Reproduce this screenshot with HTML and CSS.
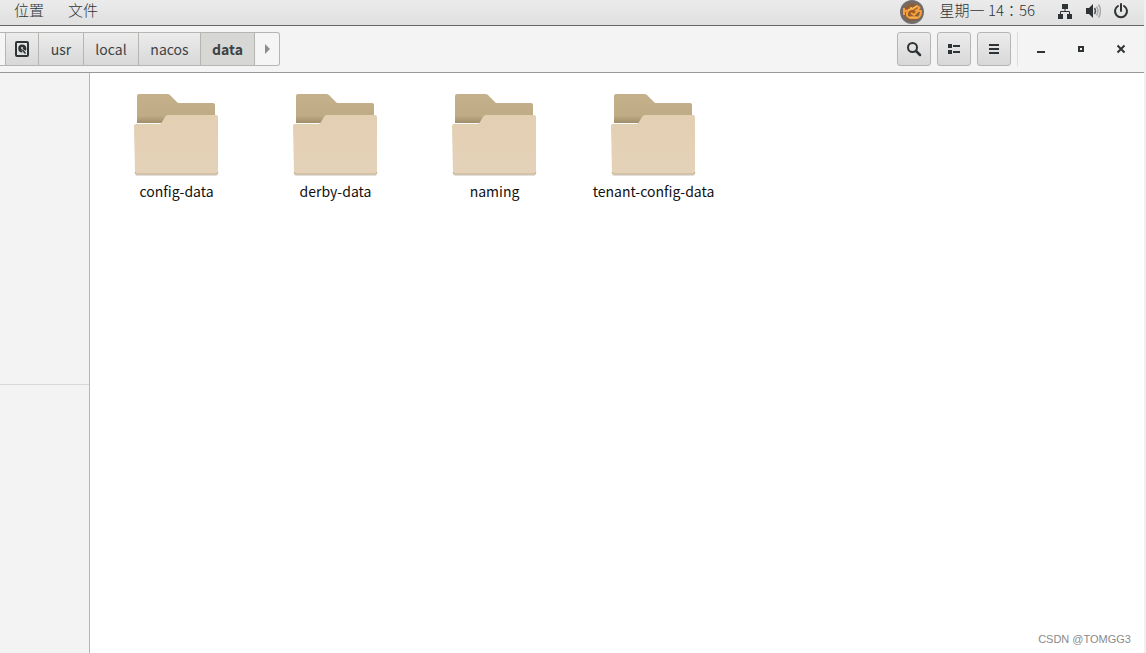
FILE: index.html
```html
<!DOCTYPE html>
<html lang="zh-CN">
<head>
<meta charset="utf-8">
<title>data</title>
<link rel="stylesheet" href="styles.css">
</head>
<body>
<svg class="defs" aria-hidden="true">
  <defs>
    <linearGradient id="back" x1="0" y1="0" x2="0" y2="1">
      <stop offset="0" stop-color="#c4b18c"/><stop offset=".75" stop-color="#bfac86"/><stop offset="1" stop-color="#a08e6b"/>
    </linearGradient>
    <linearGradient id="front" x1="0" y1="0" x2="0" y2="1">
      <stop offset="0" stop-color="#e3cfb2"/><stop offset="1" stop-color="#e4d2b9"/>
    </linearGradient>
    <symbol id="folder" viewBox="0 0 86 84">
      <path d="M3 31V4q0-2 2-2h28q2 0 3 1l6 6q1 2 3 2h34q2 0 2 2v18z" fill="url(#back)"/>
      <path d="M1 80h83q0 4-2 4H3q-2 0-2-4z" fill="#000" opacity=".12"/>
      <path d="M2 32h23q2 0 3-2l3-5q1-2 3-2h48q2 0 2 2v56q0 2-2 2H3q-2 0-2-2L0 34q0-2 2-2z" fill="url(#front)"/>
      <path d="M1 80q0 2 2 2h79q2 0 2-2" fill="none" stroke="#c4b293"/>
    </symbol>
  </defs>
</svg>
<div class="desktop">
  <header class="panel">
    <nav class="menus">
      <button class="menu">位置</button>
      <button class="menu">文件</button>
    </nav>
    <div class="status">
      <svg class="tray" viewBox="0 0 24 24" role="img" aria-label="输入法">
        <defs><radialGradient id="tray"><stop offset="0" stop-color="#a85a1c"/><stop offset=".6" stop-color="#87603f"/><stop offset="1" stop-color="#6c7078"/></radialGradient></defs>
        <circle cx="12" cy="12" r="12" fill="url(#tray)"/>
        <path d="M4 8v7M4 12l3-2M7 16q-1-7 6-7l4-3 3 2M7 16l3 2h7q4-1 4-7h-3l-4 4-3-2M15 11l5-3M11 9V7" fill="none" stroke="#f79f3b" stroke-width="2" stroke-linejoin="round"/>
        <path d="M8 10l5-2 4-2M10 17h7" fill="none" stroke="#ffc267"/>
      </svg>
      <time class="clock" lang="zh-Hant">星期一 14：56</time>
      <svg class="sys" viewBox="0 0 16 16" fill="#2e3436"><path d="M5 1h6v5H5zM1 11h5v5H1zM10 11h5v5h-5z"/><path d="M8 6v3M3.500 11V8.500h9V11" fill="none" stroke="#2e3436"/></svg>
      <svg class="sys" viewBox="0 0 16 16" fill="#2e3436"><path d="M1 5h3l4-4v14l-4-4H1z"/><path d="M9.500 5q2 3 0 6" fill="none" stroke="#555" stroke-width="1.500"/><path d="M11.500 3.500q3 4.500 0 9M13.500 1.500q4 6.500 0 13" fill="none" stroke="#aaa" stroke-width="1.500"/></svg>
      <svg class="sys" viewBox="0 0 16 16" fill="none" stroke="#2e3436" stroke-width="2"><path d="M5 3a6 6 0 1 0 6 0M8 1v7" stroke-linecap="round"/></svg>
    </div>
  </header>
  <div class="toolbar">
    <nav class="path" aria-label="路径">
      <button class="crumb edge" aria-label="后退"></button>
      <button class="crumb disk" aria-label="计算机"><svg class="icon" viewBox="0 0 16 16"><rect x="2" y="1" width="12" height="14" rx="1" fill="none" stroke="#2e3436" stroke-width="2"/><path d="M8 3.500a4 4 0 1 0 .5 8L7.500 9 9 8l2.500 2A4 4 0 0 0 8 3.500z" fill="#2e3436"/><circle cx="8" cy="7" r="1" fill="#e4e4e4"/><path d="M8.500 9l3 3.500" stroke="#2e3436" stroke-width="1.500"/></svg></button>
      <button class="crumb usr">usr</button>
      <button class="crumb local">local</button>
      <button class="crumb nacos">nacos</button>
      <button class="crumb data">data</button>
      <button class="crumb next" aria-label="前进"><svg class="icon" viewBox="0 0 16 16"><path d="M6 3l5 5-5 5z" fill="#8b8e8f"/></svg></button>
    </nav>
    <div class="actions">
      <button class="tool" aria-label="搜索"><svg class="icon" viewBox="0 0 16 16" fill="none" stroke="#2e3436" stroke-width="2"><circle cx="6.500" cy="6.500" r="4.500"/><path d="M10 10l4 4" stroke-width="2.500" stroke-linecap="round"/></svg></button>
      <button class="tool" aria-label="列表视图"><svg class="icon" viewBox="0 0 16 16" fill="#2e3436"><path d="M2 3h4v4H2zM2 9h4v4H2zM7 4h7v2H7zM7 10h7v2H7z"/></svg></button>
      <button class="tool" aria-label="菜单"><svg class="icon" viewBox="0 0 16 16" fill="#2e3436"><path d="M3 3h10v2H3zM3 7h10v2H3zM3 11h10v2H3z"/></svg></button>
      <div class="window">
        <button class="win" aria-label="最小化"><svg class="icon" viewBox="0 0 16 16"><path d="M4 10h8v2H4z" fill="#2e3436"/></svg></button>
        <button class="win" aria-label="最大化"><svg class="icon" viewBox="0 0 16 16"><path d="M6 6h4v4H6z" fill="none" stroke="#2e3436" stroke-width="2"/></svg></button>
        <button class="win" aria-label="关闭"><svg class="icon" viewBox="0 0 16 16"><path d="M4.500 4.500l7 7M11.500 4.500l-7 7" stroke="#2e3436" stroke-width="2"/></svg></button>
      </div>
    </div>
  </div>
  <div class="body">
    <aside class="sidebar"><div class="places"></div></aside>
    <main class="files">
      <ul class="grid">
        <li class="item"><svg class="folder"><use href="#folder"/></svg><span>config-data</span></li>
        <li class="item"><svg class="folder"><use href="#folder"/></svg><span>derby-data</span></li>
        <li class="item"><svg class="folder"><use href="#folder"/></svg><span>naming</span></li>
        <li class="item"><svg class="folder"><use href="#folder"/></svg><span>tenant-config-data</span></li>
      </ul>
      <footer class="credit">CSDN @TOMGG3</footer>
    </main>
  </div>
</div>
</body>
</html>
```

FILE: styles.css
```css
* { box-sizing: border-box; }
body {
  margin: 0;
  background: #f0f0f0;
  color: #2e3436;
  font: 14px/20px "Noto Sans CJK SC", "Noto Sans", sans-serif;
}
button { font: inherit; color: inherit; margin: 0; padding: 0; border: 0; background: none; }
svg { display: block; flex: none; }
.defs { position: absolute; width: 0; height: 0; }
.desktop { display: flex; flex-direction: column; min-height: 100vh; margin-right: 2px; }
.panel {
  display: flex;
  justify-content: space-between;
  height: 26px;
  padding: 0 15px 0 14px;
  background: linear-gradient(#ebebeb, #e0e0e0);
  border-bottom: 1px solid #666;
  font-size: 15px;
}
.menus { display: flex; gap: 24px; font-weight: 300; }
.menu { height: 20px; }
.status { display: flex; align-items: flex-start; gap: 12px; }
.tray { width: 24px; height: 24px; margin-right: 4px; }
.clock { font-family: "Noto Sans CJK TC", "Noto Sans CJK SC", sans-serif; font-weight: 300; margin-right: 10px; }
.sys { width: 16px; height: 16px; margin-top: 3px; }
.toolbar {
  display: flex;
  justify-content: space-between;
  height: 47px;
  padding: 6px 7px 0 0;
  background: #f4f4f4;
  border-bottom: 1px solid #999;
}
.path { display: flex; height: 34px; color: #3c4244; }
.crumb {
  display: flex;
  align-items: center;
  justify-content: center;
  border: 1px solid #b5b5b1;
  border-left-width: 0;
  background: linear-gradient(#ececec, #d8d8d8);
}
.edge, .next { background: #f5f5f5; }
.edge { width: 6px; }
.disk { width: 33px; }
.usr { width: 45px; }
.local { width: 55px; }
.nacos { width: 62px; }
.data { width: 54px; background: #d7d7d5; font-weight: 700; }
.next { width: 25px; border-radius: 0 3px 3px 0; }
.icon { width: 16px; height: 16px; }
.actions { display: flex; gap: 6px; height: 34px; }
.tool {
  display: flex;
  align-items: center;
  justify-content: center;
  width: 34px;
  border: 1px solid #b5b5b1;
  border-radius: 3px;
  background: linear-gradient(#ececec, #d8d8d8);
}
.window { display: flex; gap: 8px; padding-left: 7px; border-left: 1px solid #ddd; }
.win { display: flex; align-items: center; justify-content: center; width: 32px; }
.body { display: flex; flex: 1; }
.sidebar { width: 90px; background: #f3f3f3; border-right: 1px solid #b5b5b5; }
.places { height: 312px; border-bottom: 1px solid #d8d8d8; }
.files { display: flex; flex: 1; flex-direction: column; justify-content: space-between; background: #fff; }
.grid { display: flex; flex-wrap: wrap; margin: 0; padding: 19px 0 0 7px; list-style: none; }
.item { display: flex; flex-direction: column; align-items: center; gap: 5px; width: 159px; color: #111; }
.folder { width: 86px; height: 84px; }
.credit { align-self: flex-end; padding: 0 13px 4px 0; color: #8a8a8a; font: 11px/20px "Liberation Sans", Arial, sans-serif; }
```
